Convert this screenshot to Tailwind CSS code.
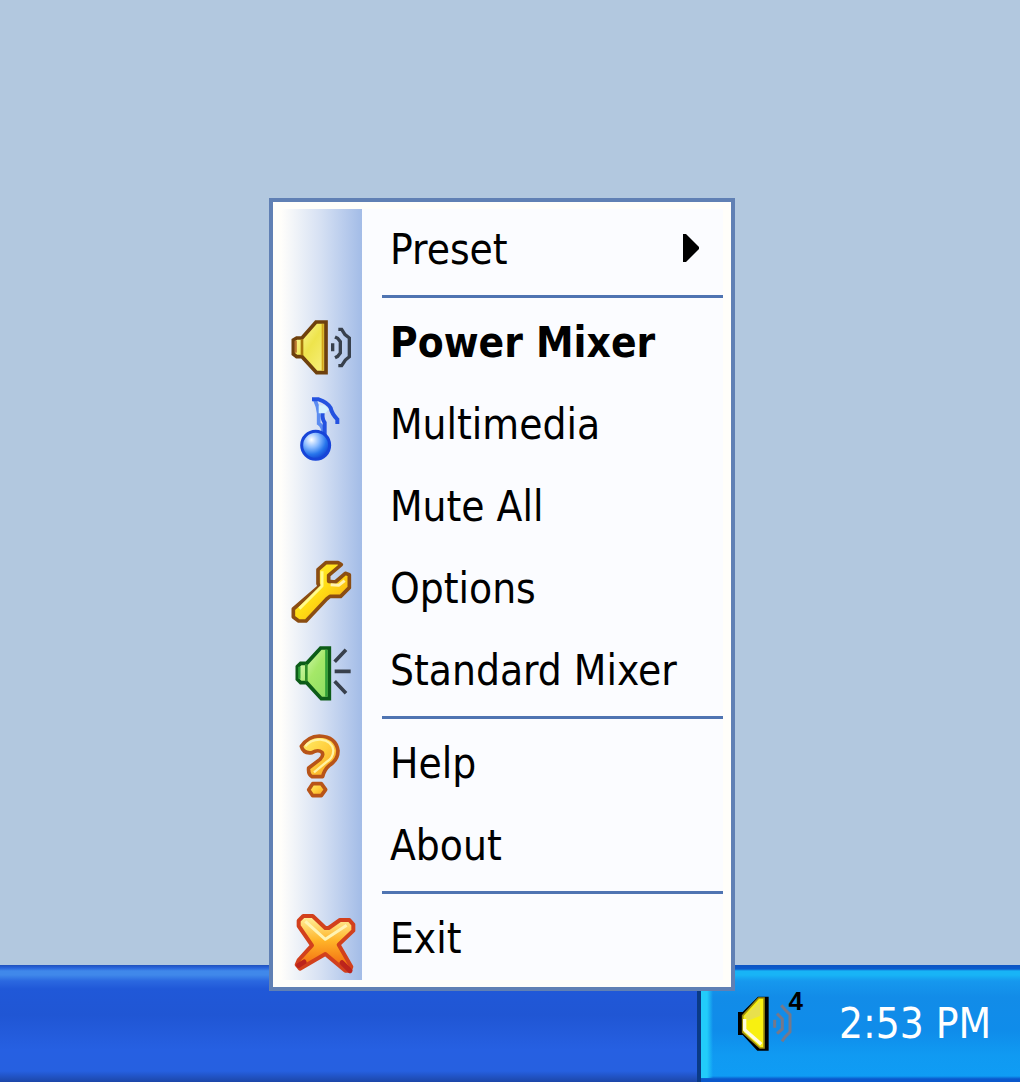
<!DOCTYPE html>
<html lang="en">
<head>
    <meta charset="UTF-8">
    <meta name="viewport" content="width=device-width, initial-scale=1.0">
    <title>Power Mixer</title>
    <!-- Tailwind CSS CDN -->
    <script src="https://cdn.jsdelivr.net/npm/@tailwindcss/browser@4"></script>
</head>
<body class="relative flex flex-col min-h-screen overflow-hidden bg-[#b2c8df] font-['DejaVu_Sans_Condensed','DejaVu_Sans',sans-serif] text-[42px] text-black">

    <!-- Desktop -->
    <main class="flex-1"></main>

    <!-- Taskbar -->
    <footer class="flex h-[117px]">
        <div class="flex-1 bg-[linear-gradient(to_bottom,#1f50bd_0px,#2a66dc_3px,#4088ea_6px,#4088ea_10px,#2b68e0_16px,#2058d8_24px,#2056d4_50px,#2660e2_85px,#2660e0_106px,#1c46a8_117px)]"></div>
        <div class="flex items-center w-[323px] border-l-4 border-[#0a3a86] bg-[linear-gradient(to_bottom,#0c55c4_0px,#0c5ccc_4px,#18b4f6_6px,#18b4f6_10px,#1698ee_16px,#128ce8_32px,#0f8cea_65px,#109af2_90px,#0f9cf4_111px,#0a58cc_114px,#0a58cc_117px)]">
            <div class="self-stretch w-3 my-1 bg-linear-to-r from-[#22ccfa] from-50% to-[#22ccfa]/0"></div>
            <button type="button" aria-label="Volume" class="relative ml-6 w-[66px] h-[66px]">
                <svg viewBox="177 122 198 198" class="w-full h-full" fill="none">
                    <path d="M180 185h14l46-46h32v162h-34l-44-47h-14z" fill="#000"/>
                    <path d="M194 196l48-53h16v150h-12l-52-47z" fill="#f8f010" stroke="#9a8c10" stroke-width="5"/>
                    <path d="M200 198l46-47v46l-36 14z" fill="#e8e04c"/>
                    <path d="M200 206v32l50 44" stroke="#fffbe0" stroke-width="10"/>
                    <path d="M290 208v24M297 190l16 16v30l-16 14M310 165l10 12 16 16v52l-14 14-10 14" stroke="#75788a" stroke-width="9"/>
                </svg>
                <span class="absolute -top-1 right-0 font-['Liberation_Sans',sans-serif] text-[26px] leading-7 font-bold">4</span>
            </button>
            <time class="ml-9 text-white">2:53 PM</time>
        </div>
    </footer>

    <!-- Tray menu -->
    <nav class="absolute right-[285px] bottom-[91px] w-[466px] border-4 border-[#6080b4] bg-[#fffefa] px-2 py-[7px] leading-[82px] whitespace-nowrap">
        <div class="flex bg-[#fbfcff]">
            <!-- Icon strip -->
            <div class="w-[81px] shrink-0 bg-linear-to-r from-[#fffefb] via-[#d5e0f3] to-[#a3bce7]">
                <div class="h-[93px]"></div>
                <svg viewBox="3 -12 243 246" class="block h-[82px] w-full" fill="none">
                    <defs>
                        <linearGradient id="gold" x1="0" y1="0" x2="1" y2="1"><stop stop-color="#fffbb0"/><stop offset=".5" stop-color="#eee44c"/><stop offset="1" stop-color="#f8f080"/></linearGradient>
                        <radialGradient id="blue" cx=".35" cy=".3" r=".8"><stop stop-color="#fff"/><stop offset=".35" stop-color="#8bbcff"/><stop offset=".65" stop-color="#2876ec"/><stop offset="1" stop-color="#0a2fc8"/></radialGradient>
                        <linearGradient id="wrench" x1="0" y1="0" x2="1" y2="1"><stop stop-color="#fff83c"/><stop offset=".5" stop-color="#ffdc14"/><stop offset="1" stop-color="#f59a10"/></linearGradient>
                        <linearGradient id="green" x1="0" y1="0" x2="1" y2="1"><stop stop-color="#e8ffd0"/><stop offset=".5" stop-color="#a5e868"/><stop offset="1" stop-color="#8bdc62"/></linearGradient>
                        <linearGradient id="help" x1="0" y1="0" x2="1" y2="1"><stop stop-color="#fff06c"/><stop offset=".5" stop-color="#ffce3c"/><stop offset="1" stop-color="#f89a18"/></linearGradient>
                        <linearGradient id="cross" x1="0" y1="0" x2="0" y2="1"><stop stop-color="#fff2a0"/><stop offset=".45" stop-color="#ffb428"/><stop offset="1" stop-color="#f0600c"/></linearGradient>
                    </defs>
                    <path d="M40 102l10-6 16 0 42-48h30v152h-28l-44-48h-16l-10-8z" fill="url(#gold)" stroke="#6e400c" stroke-width="11"/>
                    <path d="M66 100v48" stroke="#a8780c" stroke-width="8"/>
                    <path d="M47 104v36" stroke="#b87430" stroke-width="7"/>
                    <path d="M128 54v140" stroke="#d2a41a" stroke-width="6"/>
                    <path d="M158 112v24M165 93l8 4 8 10v34l-8 10-8 4M175 70h10l10 16 13 10v56l-12 10-11 17h-10" stroke="#38404c" stroke-width="10"/>
                </svg>
                <svg viewBox="3 -12 243 246" class="block h-[82px] w-full" fill="none">
                    <path d="M104 34q10 20 12 42v30q14 8 14 36" stroke="#5c8cf0" stroke-width="11"/>
                    <path d="M96 34h20q26 8 36 26 4 18 20 34v14M134 142v-38q-8-12-6-30" stroke="#2452e0" stroke-width="12"/>
                    <path d="M116 52h18l12 12-10 12h-20z" fill="#d5f2ff"/>
                    <circle cx="107" cy="172" r="42" fill="url(#blue)" stroke="#1744d8" stroke-width="9"/>
                </svg>
                <div class="h-[82px]"></div>
                <svg viewBox="3 -12 243 246" class="block h-[82px] w-full" fill="none" stroke-linejoin="round">
                    <path d="M184 38l-10-6h-36l-24 21v42l4 8-78 68v24l16 12h22l62-66 10-8h32l26-26V68l-12-4-30 26-20-2v-18z" fill="url(#wrench)" stroke="#8b4d12" stroke-width="11"/>
                    <path d="M126 58v44l-68 68" stroke="#fffb8c" stroke-width="9"/>
                    <path d="M152 98l24 2 18-14" stroke="#fff2b0" stroke-width="9"/>
                </svg>
                <svg viewBox="3 -12 243 246" class="block h-[82px] w-full" fill="none">
                    <path d="M52 98l10-10h18l42-46h26v152h-24l-44-48H62l-10-10z" fill="url(#green)" stroke="#0c5c18" stroke-width="11"/>
                    <path d="M79 90v52" stroke="#2f8c28" stroke-width="8"/>
                    <path d="M58 98v36M139 48v140" stroke="#30a038" stroke-width="7"/>
                    <path d="M164 83l34-36M164 112h48M164 142l34 36" stroke="#38404c" stroke-width="11"/>
                </svg>
                <div class="h-[11px]"></div>
                <svg viewBox="3 -12 243 246" class="block h-[82px] w-full" fill="none" stroke-linejoin="round">
                    <path d="M64 58q20-30 54-31 50 2 56 44 0 28-26 44-16 14-20 34H96q-12-6-10-26l34-26q12-12 6-21-12-10-30 1-26 4-32-19z" fill="url(#help)" stroke="#b85418" stroke-width="11"/>
                    <path d="M76 58q18-22 46-20 34 4 38 32 0 24-22 36l-36 30" stroke="#fff3a4" stroke-width="7"/>
                    <path d="M98 170h26l13 18-13 18H98l-12-18z" fill="url(#help)" stroke="#b85418" stroke-width="11"/>
                </svg>
                <div class="h-[93px]"></div>
                <svg viewBox="3 -12 243 246" class="block h-[82px] w-full" fill="none" stroke-linejoin="round">
                    <path d="M56 56l14-14h28l38 36h10l34-24h28l12 14v18l-44 42 38 66-4 12h-14l-60-50-76 44-10-12 6-14 40-44-40-58z" fill="url(#cross)" stroke="#d2401c" stroke-width="12"/>
                    <path d="M76 58l60 54 64-42" stroke="#fff4b4" stroke-width="9"/>
                    <path d="M56 190l16-10M186 182l24 24" stroke="#bc241c" stroke-width="15" stroke-linecap="round"/>
                </svg>
            </div>

            <!-- Entries -->
            <div class="flex-1 pl-5">
                <a href="#" class="flex h-[82px] items-center justify-between pl-2 pr-6">
                    Preset
                    <svg viewBox="0 0 16 32" class="w-4 h-8"><path d="M0 0h3l13 13v2L3 28H0z"/></svg>
                </a>
                <hr class="my-1 border-0 h-[3px] bg-[#4f74b2]">
                <a href="#" class="block h-[82px] pl-2 font-bold">Power Mixer</a>
                <a href="#" class="block h-[82px] pl-2">Multimedia</a>
                <a href="#" class="block h-[82px] pl-2">Mute All</a>
                <a href="#" class="block h-[82px] pl-2">Options</a>
                <a href="#" class="block h-[82px] pl-2">Standard Mixer</a>
                <hr class="my-1 border-0 h-[3px] bg-[#4f74b2]">
                <a href="#" class="block h-[82px] pl-2">Help</a>
                <a href="#" class="block h-[82px] pl-2">About</a>
                <hr class="my-1 border-0 h-[3px] bg-[#4f74b2]">
                <a href="#" class="block h-[82px] pl-2">Exit</a>
            </div>
        </div>
    </nav>

</body>
</html>
